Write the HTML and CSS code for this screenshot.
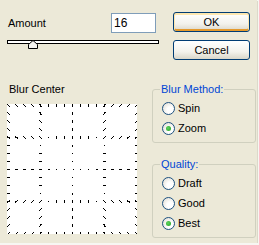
FILE: index.html
```html
<!DOCTYPE html>
<html lang="en">
<head>
    <meta charset="UTF-8">
    <title>Radial Blur</title>
    <link rel="stylesheet" href="styles.css">
</head>
<body>

    <div class="dialog">
        <div class="top">
            <div class="amount">
                <div class="amount-row">
                    <span class="label">Amount</span>
                    <input type="text" class="amount-input" value="16">
                </div>
                <div class="slider">
                    <div class="track"></div>
                    <svg class="thumb" width="10" height="9" viewBox="0 0 10 9">
                        <path d="M0.5 8.5 V4.5 L5 0.5 L9.5 4.5 V8.5 Z" fill="#f6f5f1" stroke="#000" stroke-width="1"/>
                    </svg>
                </div>
            </div>
            <div class="actions">
                <button class="button default">OK</button>
                <button class="button">Cancel</button>
            </div>
        </div>

        <div class="bottom">
            <div class="center-col">
                <div class="label">Blur Center</div>
                <svg class="center-box" id="center" width="130" height="130" viewBox="0 0 130 130"></svg>
            </div>
            <div class="groups">
                <fieldset class="group">
                    <legend>Blur Method:</legend>
                    <label class="radio"><span class="dot"></span>Spin</label>
                    <label class="radio"><span class="dot checked"></span>Zoom</label>
                </fieldset>
                <fieldset class="group quality">
                    <legend>Quality:</legend>
                    <label class="radio"><span class="dot"></span>Draft</label>
                    <label class="radio"><span class="dot"></span>Good</label>
                    <label class="radio"><span class="dot checked"></span>Best</label>
                </fieldset>
            </div>
        </div>
    </div>

    <script>
        // zoom pattern: short dashes on a 4x4 grid, each one pointing at the middle
        const svg = document.getElementById('center');
        const mid = 65;
        const lines = [1, 33, 65, 97, 129];

        function dash(x, y) {
            const dx = x - mid;
            const dy = y - mid;
            const d = Math.hypot(dx, dy);
            let x1 = x, y1 = y, x2 = x + 1, y2 = y;
            if (d > 1) {
                const len = 1 + d / 24;
                const ux = dx / d, uy = dy / d;
                x1 = x - ux * len / 2;
                y1 = y - uy * len / 2;
                x2 = x + ux * len / 2;
                y2 = y + uy * len / 2;
            }
            const l = document.createElementNS('http://www.w3.org/2000/svg', 'line');
            l.setAttribute('x1', x1 + 0.5);
            l.setAttribute('y1', y1 + 0.5);
            l.setAttribute('x2', x2 + 0.5);
            l.setAttribute('y2', y2 + 0.5);
            svg.appendChild(l);
        }

        lines.forEach(function (line) {
            for (let t = 1; t <= 129; t += 8) {
                dash(t, line);
                if (lines.indexOf(t) === -1) {
                    dash(line, t);
                }
            }
        });
    </script>

</body>
</html>
```

FILE: styles.css
```css
html {
    background-color: #f7f6f2;
}

body {
    margin: 0;
    font-family: "Liberation Sans", Arial, sans-serif;
    font-size: 11px;
    color: #000;
}

.dialog {
    width: 257px;
    height: 243px;
    background-color: #ece9d8;
    box-shadow: 1px 1px 0 #dcd9c9;
    box-sizing: border-box;
    padding: 12px 0 0 7px;
}

.top {
    display: flex;
    height: 60px;
}

.amount {
    width: 152px;
    padding-top: 1px;
}

.amount-row {
    display: flex;
    align-items: center;
    justify-content: space-between;
    height: 20px;
    padding-left: 1px;
    padding-right: 3px;
}

.amount-input {
    width: 45px;
    height: 20px;
    box-sizing: border-box;
    border: 1px solid #7f9db9;
    background-color: #fff;
    font-family: "Liberation Sans", Arial, sans-serif;
    font-size: 12px;
    padding: 0 2px;
    margin: 0;
    outline: none;
}

.slider {
    position: relative;
    margin-top: 7px;
    height: 9px;
}

.track {
    height: 2px;
    border: 1px solid #000;
    background-color: #fff;
}

.thumb {
    position: absolute;
    left: 21px;
    top: 0;
    display: block;
}

.actions {
    display: flex;
    flex-direction: column;
    gap: 8px;
    margin-left: 14px;
}

.button {
    width: 77px;
    height: 20px;
    padding: 0;
    font-family: "Liberation Sans", Arial, sans-serif;
    font-size: 11px;
    color: #000;
    border: 1px solid #003c74;
    border-radius: 3px;
    background: linear-gradient(#ffffff, #f3f2ec 60%, #d9d6c9);
    cursor: pointer;
}

.button.default {
    box-shadow: inset 0 1px 0 1px #fde7b0, inset 0 -1px 0 1px #e59a2c;
}

.bottom {
    display: flex;
    margin-top: 11px;
}

.center-col {
    width: 130px;
}

.center-col .label {
    line-height: 13px;
    padding-left: 2px;
    margin-bottom: 8px;
}

.center-box {
    display: block;
    background-color: #fff;
    shape-rendering: crispEdges;
}

.center-box line {
    stroke: #000;
    stroke-width: 1;
}

.groups {
    display: flex;
    flex-direction: column;
    gap: 15px;
    margin-left: 15px;
    width: 104px;
}

.group {
    margin: 0;
    border: 1px solid #d0d0bf;
    border-radius: 3px;
    padding: 2px 0 4px 9px;
}

.group legend {
    color: #0046d5;
    line-height: 13px;
    padding: 0 1px;
    margin-left: -2px;
}

.radio {
    display: flex;
    align-items: center;
    gap: 3px;
    height: 20px;
}

.dot {
    width: 13px;
    height: 13px;
    box-sizing: border-box;
    border: 1px solid #1c5180;
    border-radius: 50%;
    background: radial-gradient(circle at 65% 65%, #ffffff 30%, #dcd8cc 100%);
    display: flex;
    align-items: center;
    justify-content: center;
}

.dot.checked::after {
    content: "";
    width: 5px;
    height: 5px;
    border-radius: 50%;
    background: radial-gradient(circle at 40% 40%, #5fd35f, #21a121);
}
```
